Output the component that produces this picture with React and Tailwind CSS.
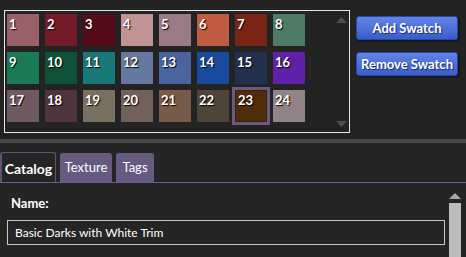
import React from 'react'

const swatches = [
  '#9a6068', '#741a28', '#560c18', '#bf9492', '#9a7a84', '#c05a40', '#7a2416', '#4f7a66',
  '#1a7a56', '#0e5038', '#187878', '#6478a0', '#4a64a0', '#1a4a9e', '#22304e', '#6020a8',
  '#705a62', '#4e343c', '#787060', '#706258', '#785a4a', '#4e4438', '#4e2e0a', '#908488',
]

const font = { fontFamily: 'Lato, "Noto Sans", sans-serif' }

function Swatch({ n, color, selected }) {
  if (selected) {
    return (
      <div className="w-[32px] h-[32px] relative">
        <div className="absolute -inset-[3px] border-[3px] border-[#6a5a80]"></div>
        <div
          className="w-full h-full pl-[2px] pt-[3px] text-[13px] leading-[12px] font-bold text-white border border-[#3a2208] [text-shadow:1px_1px_1px_#000]"
          style={{ backgroundColor: color }}
        >
          {n}
        </div>
      </div>
    )
  }
  return (
    <div
      className="w-[32px] h-[32px] pl-[2px] pt-[4px] text-[13px] leading-[12px] font-bold text-white [text-shadow:1px_1px_1px_#000]"
      style={{ backgroundColor: color }}
    >
      {n}
    </div>
  )
}

function BlueButton({ children }) {
  return (
    <button className="w-[102px] h-[24px] whitespace-nowrap rounded-[3px] border border-[#2c46a8] bg-gradient-to-b from-[#6284e6] to-[#3a5ccc] text-white text-[13px] font-bold leading-none shadow-[1px_1px_2px_rgba(0,0,0,0.6)] [text-shadow:1px_1px_1px_#1a2a60]">
      {children}
    </button>
  )
}

export default function App() {
  return (
    <div className="w-[466px] h-[257px] bg-[#252525] overflow-hidden flex flex-col" style={font}>
      {/* top: swatch grid + buttons */}
      <div className="h-[139px] flex bg-[#232323]">
        <div className="ml-[4px] mt-[10px] w-[346px] h-[123px] border border-[#e6e6e6] flex">
          <div className="pl-[2px] pt-[3px] grid grid-cols-[repeat(8,32px)] gap-[6px] content-start">
            {swatches.map((c, i) => (
              <Swatch key={i} n={i + 1} color={c} selected={i === 22} />
            ))}
          </div>
          <div className="ml-auto w-[12px] mr-[2px] flex flex-col items-center justify-between pt-[6px] pb-[5px]">
            <svg width="11" height="6" viewBox="0 0 11 6">
              <path d="M0 6 L5.5 0 L11 6 Z" fill="#4e4e4e" />
            </svg>
            <svg width="11" height="6" viewBox="0 0 11 6">
              <path d="M0 0 L5.5 6 L11 0 Z" fill="#4e4e4e" />
            </svg>
          </div>
        </div>
        <div className="ml-[6px] mt-[16px] flex flex-col gap-[12px]">
          <BlueButton>Add Swatch</BlueButton>
          <BlueButton>Remove Swatch</BlueButton>
        </div>
      </div>

      <div className="h-[4px] bg-[#474747]"></div>

      {/* tabs */}
      <div className="mt-[10px] flex items-end gap-[4px] border-b border-[#6a5a8a] h-[30px]">
        <div className="h-[30px] w-[56px] rounded-t-[3px] border-l-2 border-t border-r border-[#5e5276] bg-[#252525] flex items-center justify-center pt-[2px] text-white text-[14px] font-bold">
          Catalog
        </div>
        <div className="h-[29px] w-[52px] rounded-t-[3px] bg-[#675a80] flex items-center justify-center text-white text-[13px]">
          Texture
        </div>
        <div className="h-[29px] w-[38px] rounded-t-[3px] bg-[#675a80] flex items-center justify-center text-white text-[13px]">
          Tags
        </div>
      </div>

      {/* tab content */}
      <div className="flex flex-1">
        <div className="flex-1 pl-[7px] pt-[12px]">
          <div className="ml-[4px] text-white text-[13px] leading-[16px] font-bold">Name:</div>
          <div className="mt-[9px] w-[438px] h-[25px] border border-[#c8c8c8] flex items-center pl-[7px] text-white text-[12px]">
            Basic Darks with White Trim
          </div>
        </div>
        <div className="w-[12px] mr-[5px] pt-[10px] flex flex-col items-center">
          <svg width="12" height="6" viewBox="0 0 12 6">
            <path d="M0 6 L6 0 L12 6 Z" fill="#a8a8a8" />
          </svg>
          <div className="mt-[4px] w-[12px] flex-1 bg-[#bdbdbd]"></div>
        </div>
      </div>
    </div>
  )
}
